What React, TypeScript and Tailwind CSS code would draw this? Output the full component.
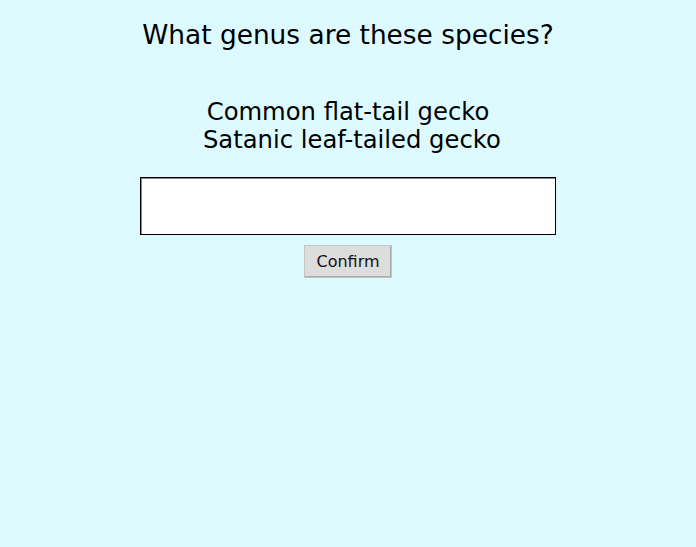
const App = () => {
  return (
    <div className="min-h-screen bg-[#dcfaff] text-black font-['DejaVu_Sans',sans-serif]">
      <div className="flex flex-col items-center pt-5">
        <h1 className="text-[26.4px] leading-[30px]">What genus are these species?</h1>
        <div className="mt-12 text-[24.25px] leading-[28px] text-center">
          <div>Common flat-tail gecko</div>
          <div>{"\u00a0"}Satanic leaf-tailed gecko</div>
        </div>
        <textarea className="mt-[23px] w-[416px] h-[58px] bg-white border border-black shadow-[inset_1px_1px_0_#888] resize-none outline-none" />
        <button className="mt-[10px] h-[33px] px-[11px] bg-[#dddddd] border border-[#c4c4c4] shadow-[inset_-1px_-1px_0_#aaa] text-[16px] text-[#111]">
          Confirm
        </button>
      </div>
    </div>
  );
};

export default App;
